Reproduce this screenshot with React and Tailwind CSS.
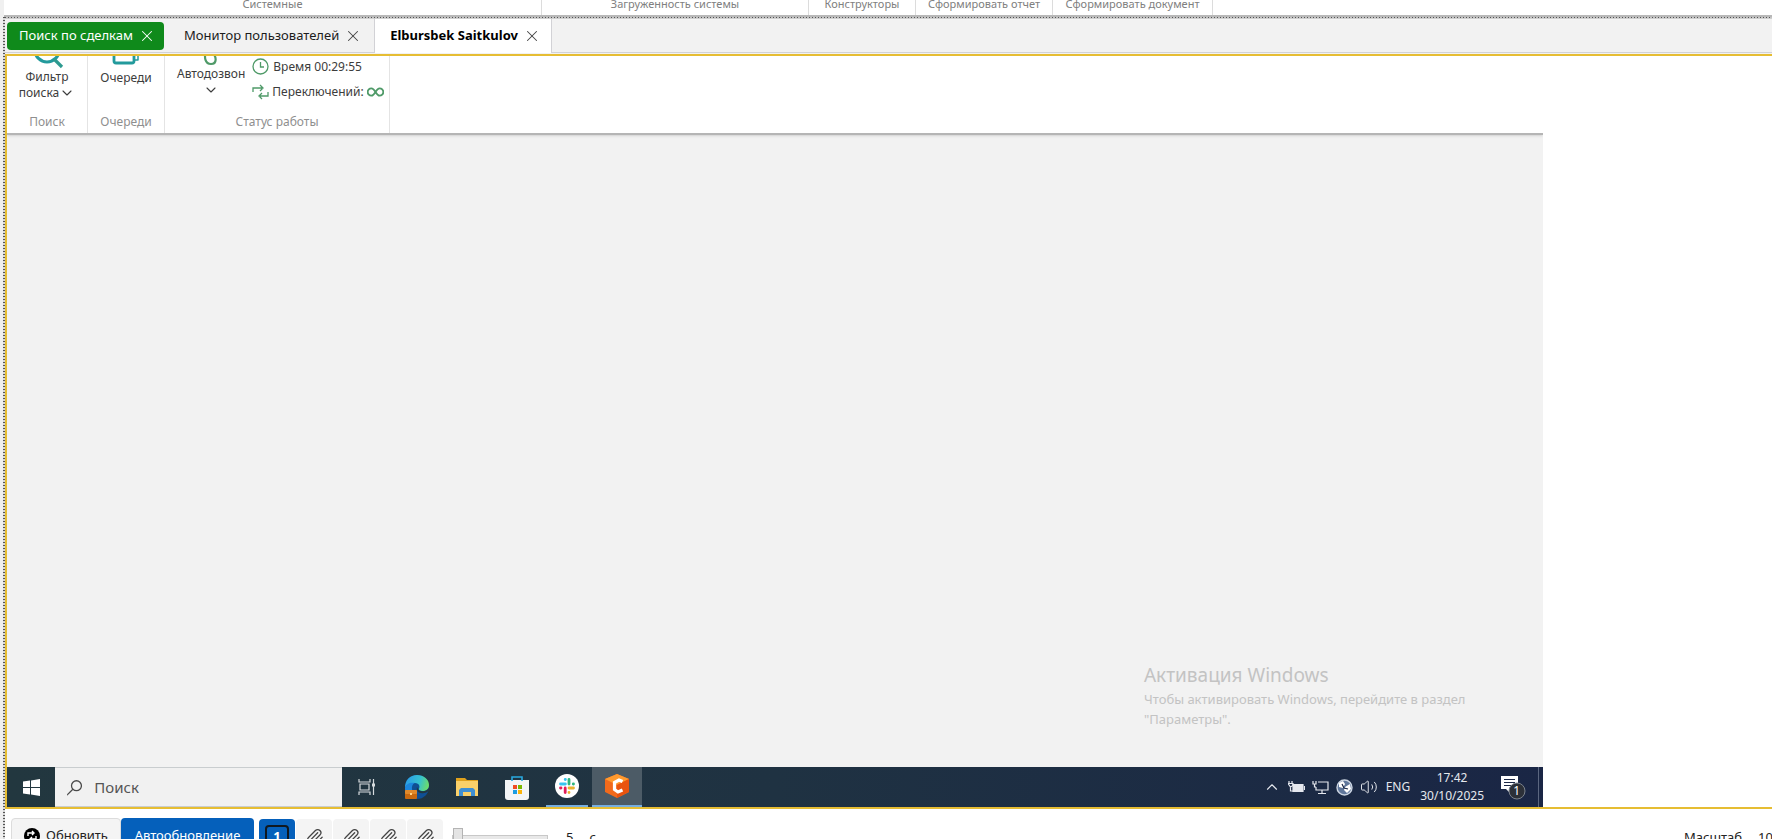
import { ChevronDown, ChevronUp, Paperclip, Volume2, X } from 'lucide-react';

const ribbonGroups = [
  { label: 'Системные', width: 'w-[538px]' },
  { label: 'Загруженность системы', width: 'w-[267px]' },
  { label: 'Конструкторы', width: 'w-[107px]' },
  { label: 'Сформировать отчет', width: 'w-[137px]' },
  { label: 'Сформировать документ', width: 'w-[160px]' },
];

const TopRibbon = () => (
  <header className="flex h-[15px] shrink-0 items-end overflow-hidden bg-white">
    {ribbonGroups.map((group) => (
      <div
        key={group.label}
        className={`${group.width} shrink-0 border-r border-[#dcdcdc] pb-[3px] text-center text-[11px] leading-4 whitespace-nowrap text-[#808080]`}
      >
        {group.label}
      </div>
    ))}
  </header>
);

const CloseButton = ({ label, className }) => (
  <button type="button" aria-label={label} className={className}>
    <X size={18} strokeWidth={1.4} />
  </button>
);

const Tabs = () => (
  <nav className="flex h-[34px] shrink-0 bg-[#f2f2f2] text-[13px]">
    <div className="flex items-center border-b border-[#d2d2d6] pl-[2px]">
      <div className="flex h-7 items-center gap-[5px] rounded bg-[#0f8a1b] pr-2 pl-3 text-white">
        <button type="button">Поиск по сделкам</button>
        <CloseButton label="Закрыть Поиск по сделкам" className="text-white" />
      </div>
    </div>
    <div className="flex items-center gap-[5px] border-b border-[#d2d2d6] pr-3 pl-5 text-[#1c1c1c]">
      <button type="button">Монитор пользователей</button>
      <CloseButton label="Закрыть Монитор пользователей" className="text-[#444]" />
    </div>
    <div className="flex items-center gap-[5px] border-x border-[#d2d2d6] bg-white pr-2.5 pl-[15px] text-black">
      <button type="button" className="font-bold">Elbursbek Saitkulov</button>
      <CloseButton label="Закрыть Elbursbek Saitkulov" className="text-[#444]" />
    </div>
    <div className="flex-1 border-b border-[#d2d2d6]" />
  </nav>
);

const FilterIcon = () => (
  <svg width="34" height="30" viewBox="0 0 34 30" fill="none" stroke="#239a9c" strokeWidth="3.2">
    <circle cx="17" cy="11" r="12" />
    <path d="M24 20l8 8" stroke="#2d9a90" />
  </svg>
);

const QueueIcon = () => (
  <svg width="30" height="30" viewBox="0 0 30 30" fill="none" stroke="#239a9c" strokeWidth="2.8" strokeLinejoin="round">
    <path d="M3 8v17q0 2 2 2h16q2 0 2-2V8z" />
    <path d="M24 24h3V4" strokeWidth="1.5" />
  </svg>
);

const DialIcon = () => (
  <svg width="16" height="30" viewBox="0 0 16 30" fill="none" stroke="#4f9a68" strokeWidth="2.2">
    <path d="M3 16c-2 5-1 12 5 12s6-7 1-12" />
  </svg>
);

const ClockIcon = () => (
  <svg width="17" height="17" viewBox="0 0 17 17" fill="none" stroke="#4f9a68" strokeWidth="1.3">
    <circle cx="8.5" cy="8.5" r="7.5" />
    <path d="M8.5 4v5H12" />
  </svg>
);

const SwitchIcon = () => (
  <svg width="17" height="16" viewBox="0 0 17 16" fill="none" stroke="#4f9a68" strokeWidth="1.3">
    <path d="M1 8V4h9M8 1l3 3-3 3M16 8v4H8M10 9l-3 3 3 3" />
  </svg>
);

const InfinityIcon = () => (
  <svg width="17" height="10" viewBox="0 0 17 10" fill="none" stroke="#4f9a68" strokeWidth="1.8">
    <path d="M8.5 5C7 2.5 6 1.3 4.4 1.3a3.6 3.6 0 0 0 0 7.4C6 8.7 7 7.5 8.5 5s2.5-3.7 4.1-3.7a3.6 3.6 0 0 1 0 7.4C11 8.7 10 7.5 8.5 5z" />
  </svg>
);

const RemoteRibbon = () => (
  <div className="flex h-[79px] shrink-0 overflow-hidden border-b-2 border-[#b5b5b5] bg-white text-xs leading-4 text-[#3c3c3c] shadow-sm">
    <section className="flex w-[81px] flex-col items-center justify-end border-r border-[#e4e4e4] pb-[3px]">
      <button type="button" className="mb-[13px] flex flex-col items-center">
        <FilterIcon />
        <span>Фильтр</span>
        <span className="flex items-center">
          поиска <ChevronDown size={16} strokeWidth={1.6} />
        </span>
      </button>
      <span className="text-[#8f8f8f]">Поиск</span>
    </section>
    <section className="flex w-[77px] flex-col items-center justify-end border-r border-[#e4e4e4] pb-[3px]">
      <button type="button" className="mb-7 flex flex-col items-center">
        <QueueIcon />
        <span className="mt-1">Очереди</span>
      </button>
      <span className="text-[#8f8f8f]">Очереди</span>
    </section>
    <section className="flex w-[225px] flex-col items-center justify-end border-r border-[#e4e4e4] pb-[3px]">
      <div className="mb-3.5 flex w-full items-end gap-[7px] pl-3">
        <button type="button" className="mb-0.5 flex flex-col items-center">
          <DialIcon />
          <span>Автодозвон</span>
          <ChevronDown size={16} strokeWidth={1.6} />
        </button>
        <div className="flex flex-col gap-[9px] whitespace-nowrap">
          <span className="flex items-center gap-1">
            <ClockIcon /> Время 00:29:55
          </span>
          <span className="flex items-center gap-[3px]">
            <SwitchIcon /> Переключений: <InfinityIcon />
          </span>
        </div>
      </div>
      <span className="text-[#8f8f8f]">Статус работы</span>
    </section>
  </div>
);

const WindowsLogo = () => (
  <svg width="17" height="17" viewBox="0 0 17 17" fill="#fff">
    <path d="M0 2.500l7-1V8H0zM8 1.400L17 0v8H8zM0 9h7v6.500l-7-1zM8 9h9v8l-9-1.400z" />
  </svg>
);

const TaskViewIcon = () => (
  <svg width="18" height="16" viewBox="0 0 18 16" fill="none" stroke="#d5dadd" strokeWidth="1.2">
    <path d="M1 0v3h11V0M2 5h9v6H2zM1 16v-3h11v3M15.500 0v16" />
    <path d="M14 4.500h3v3h-3z" fill="#d5dadd" stroke="none" />
  </svg>
);

const EdgeIcon = () => (
  <svg width="26" height="26" viewBox="0 0 26 26">
    <defs>
      <linearGradient id="edgeTop" x1="0" y1="0.3" x2="1" y2="0.5">
        <stop offset="0" stopColor="#2b9be8" />
        <stop offset="0.6" stopColor="#35c1d0" />
        <stop offset="1" stopColor="#6ddc6a" />
      </linearGradient>
    </defs>
    <circle cx="13" cy="13" r="12" fill="#0f4f94" />
    <path d="M1 14C1 6 6 1 13 1c7 0 12 4.500 12 10 0 4-3 6-6.500 6-3 0-4-1-3.500-2.500 1-1.500.5-5.500-4-5.500C6 9 2 11 1 14z" fill="url(#edgeTop)" />
    <path d="M1 14c1-4 5-6 10-5-3 1-4 5-2 9H2c-1-1-1-3-1-4z" fill="#1c86dd" />
    <path d="M13 13c-1 4 2 7 7 6 2 0 4-1 5-3v-2c-2 3-5 3.500-7 3.200-3-.2-4-1.700-5-4.200z" fill="#22373f" />
    <rect x="1" y="16" width="12" height="9" rx="1" fill="#c8690f" />
    <rect x="1" y="16" width="12" height="4" rx="1" fill="#e0892a" />
    <rect x="6" y="19" width="2" height="2" fill="#ffd487" />
  </svg>
);

const FolderIcon = () => (
  <svg width="24" height="20" viewBox="0 0 24 20">
    <path d="M1 1h9l2 2h11v16H1z" fill="#e0a11c" />
    <path d="M1 4h22v15H1z" fill="#fad069" />
    <path d="M4 19v-6l2-2h12l2 2v6h-4v-4H8v4z" fill="#3f8fd2" />
  </svg>
);

const StoreIcon = () => (
  <svg width="24" height="25" viewBox="0 0 24 25">
    <path d="M0 5h24v17q0 3-3 3H3q-3 0-3-3z" fill="#f3f5f6" />
    <path d="M7 6V2h10v4" fill="none" stroke="#29a9e0" strokeWidth="1.6" />
    <path d="M8 10h4v4H8z" fill="#f04e23" />
    <path d="M13 10h4v4h-4z" fill="#7ab800" />
    <path d="M8 15h4v4H8z" fill="#1b9de2" />
    <path d="M13 15h4v4h-4z" fill="#fbb40a" />
  </svg>
);

const SlackIcon = () => (
  <svg width="24" height="24" viewBox="0 0 24 24" fill="none" strokeWidth="2.8" strokeLinecap="round">
    <circle cx="12" cy="12" r="12" fill="#fff" />
    <path d="M5.500 10h4.900M10.400 5.500h-.2" stroke="#36c5f0" />
    <path d="M14 5.500V10M18.500 10h-.2" stroke="#2eb67d" />
    <path d="M14 14h4.500M14 18.500v-.2" stroke="#ecb22e" />
    <path d="M10.200 14v4.500M5.500 14h.5" stroke="#e01e5a" />
  </svg>
);

const CrmIcon = () => (
  <svg width="26" height="24" viewBox="0 0 26 24">
    <path d="M13 0l12 5v13l-12 6-12-6V5z" fill="#f26a1b" />
    <path d="M13 0l12 5-12 6L1 5z" fill="#ff9a2e" />
    <path d="M13 11l12-6v13l-12 6z" fill="#e9540f" />
    <path d="M18.500 7.500L15 6l-4.500 2.500v7L14 18l4.500-2" fill="none" stroke="#fff" strokeWidth="3.2" />
  </svg>
);

const BatteryIcon = () => (
  <svg width="17" height="12" viewBox="0 0 17 12" fill="none" stroke="#e5e8ee" strokeWidth="1.2">
    <path d="M5 3.500h10v7H5z" fill="#e5e8ee" />
    <path d="M16.500 5v4M1 0v2M4 0v2M0 2.500h5v2L2.500 6zM2.500 5v5H5" />
  </svg>
);

const NetworkIcon = () => (
  <svg width="17" height="15" viewBox="0 0 17 15" fill="none" stroke="#e5e8ee" strokeWidth="1.2">
    <path d="M6 2h10v8H4V7M10 10v3M6 13.500h8M1 1v3h3V1M2.500 4v3H4" />
  </svg>
);

const GlobeIcon = () => (
  <svg width="17" height="17" viewBox="0 0 17 17">
    <circle cx="8.500" cy="8.500" r="7.500" fill="#60779b" stroke="#ccd5e2" strokeWidth="1.4" />
    <path d="M3 4l4-2 2 3-2 4-4-1zM9 8l5-3 1 5-4 4-3-3z" fill="#fff" />
    <path d="M6 5l2 4 4 1" stroke="#1a2645" strokeWidth="1.2" fill="none" />
  </svg>
);

const NotificationButton = () => (
  <button type="button" aria-label="Уведомления" className="relative">
    <svg width="26" height="26" viewBox="0 0 26 26">
      <path d="M1 2h17v13h-8v4l-4-4H1z" fill="#fff" />
      <path d="M4 5.500h11M4 8.500h11M4 11.500h7" stroke="#1a2645" />
      <circle cx="17" cy="17" r="8" fill="#2c3038" stroke="#7b828b" />
    </svg>
    <span className="absolute right-[6px] bottom-[1px] text-xs leading-4 text-white">1</span>
  </button>
);

const taskbarApps = [
  { name: 'Представление задач', icon: <TaskViewIcon />, state: '' },
  { name: 'Edge', icon: <EdgeIcon />, state: '' },
  { name: 'Проводник', icon: <FolderIcon />, state: '' },
  { name: 'Store', icon: <StoreIcon />, state: '' },
  { name: 'Slack', icon: <SlackIcon />, state: 'border-b-2 border-[#76aee0] mx-1' },
  { name: 'CRM', icon: <CrmIcon />, state: 'border-b-2 border-[#76aee0] bg-[#4c5b66]' },
];

const Taskbar = () => (
  <div className="flex h-10 shrink-0 bg-linear-to-r from-[#22373f] via-[#1f3242] to-[#1a2645]">
    <button type="button" aria-label="Пуск" className="flex w-12 items-center justify-center">
      <WindowsLogo />
    </button>
    <label className="flex w-[287px] items-center gap-3 border-y border-[#c9cdcf] bg-[#f1f1f1] pl-3">
      <svg width="17" height="17" viewBox="0 0 17 17" fill="none" stroke="#4a4a4a" strokeWidth="1.4">
        <circle cx="10.500" cy="6.500" r="5.500" />
        <path d="M6.500 10.500L0 17" />
      </svg>
      <input
        type="text"
        placeholder="Поиск"
        aria-label="Поиск"
        className="w-full bg-transparent text-[15px] outline-none placeholder:text-[#555]"
      />
    </label>
    <div className="flex">
      {taskbarApps.map((app) => (
        <div key={app.name} className="flex w-[50px]">
          <button type="button" aria-label={app.name} className={`flex flex-1 items-center justify-center ${app.state}`}>
            {app.icon}
          </button>
        </div>
      ))}
    </div>
    <div className="ml-auto flex items-center text-xs text-[#e5e8ee]">
      <div className="flex items-center gap-[7px]">
        <ChevronUp size={18} strokeWidth={1.5} />
        <BatteryIcon />
        <NetworkIcon />
        <GlobeIcon />
        <Volume2 size={18} strokeWidth={1.3} />
      </div>
      <span className="ml-2">ENG</span>
      <div className="ml-2.5 text-center leading-[18px]">
        <div>17:42</div>
        <div>30/10/2025</div>
      </div>
      <div className="mr-3 ml-4 flex">
        <NotificationButton />
      </div>
      <div className="mr-1 h-10 w-px bg-[#5b667f]" />
    </div>
  </div>
);

const RemoteScreen = () => (
  <div className="flex w-[1536px] max-w-full flex-col overflow-hidden bg-[#f2f2f2]">
    <RemoteRibbon />
    <main className="flex flex-1 items-end justify-end pr-[62px] pb-[38px]">
      <div className="w-[337px] text-[13px] text-[#c3c3c3]">
        <p className="text-[19px] leading-7">Активация Windows</p>
        <p className="leading-5">Чтобы активировать Windows, перейдите в раздел "Параметры".</p>
      </div>
    </main>
    <Taskbar />
  </div>
);

const BottomBar = () => (
  <footer className="flex h-[30px] shrink-0 items-start overflow-hidden bg-white pt-[9px] text-[13px] text-[#222]">
    <button type="button" className="ml-[6px] flex h-9 w-[110px] items-center justify-center gap-1.5 rounded border border-[#dcdcdc] bg-[#f4f4f4]">
      <svg width="16" height="16" viewBox="0 0 16 16">
        <circle cx="8" cy="8" r="8" fill="#000" />
        <path d="M4 8V5h5M8 3l2 2-2 2M12 8v3H7M8 9l-2 2 2 2" fill="none" stroke="#fff" strokeWidth="1.4" />
      </svg>
      Обновить
    </button>
    <button type="button" className="h-9 w-[133px] rounded bg-[#0560bb] text-white">
      Автообновление
    </button>
    <div className="ml-[5px] flex gap-px pt-px">
      <button type="button" className="flex h-9 w-9 items-center justify-center rounded bg-[#0560bb] font-bold text-white">
        <span className="flex h-6 w-6 items-center justify-center rounded border-2 border-[#101820]">1</span>
      </button>
      {[2, 3, 4, 5].map((n) => (
        <button key={n} type="button" aria-label={`Монитор ${n}`} className="flex h-9 w-9 items-center justify-center rounded bg-[#f4f4f4] text-[#444]">
          <Paperclip size={19} strokeWidth={1.6} />
        </button>
      ))}
    </div>
    <input
      type="range"
      min="5"
      max="60"
      defaultValue="5"
      aria-label="Интервал обновления"
      className="mt-2.5 ml-[9px] h-5 w-24 appearance-none bg-transparent [&::-webkit-slider-runnable-track]:h-1.5 [&::-webkit-slider-runnable-track]:border [&::-webkit-slider-runnable-track]:border-[#c8c8c8] [&::-webkit-slider-runnable-track]:bg-[#e8e8e8] [&::-webkit-slider-thumb]:-mt-2 [&::-webkit-slider-thumb]:h-5 [&::-webkit-slider-thumb]:w-2.5 [&::-webkit-slider-thumb]:appearance-none [&::-webkit-slider-thumb]:border [&::-webkit-slider-thumb]:border-[#b4b4b4] [&::-webkit-slider-thumb]:bg-[#e4e4e4]"
    />
    <span className="mt-2.5 ml-[18px]">5</span>
    <span className="mt-2.5 ml-4">с</span>
    <div className="mt-2.5 ml-auto flex w-[88px] gap-4 overflow-hidden whitespace-nowrap">
      <span>Масштаб</span>
      <span>100%</span>
    </div>
  </footer>
);

export default function App() {
  return (
    <div className="flex h-screen flex-col overflow-hidden bg-white font-['Noto_Sans',sans-serif]">
      <div className="flex shrink-0 flex-col border-l-4 border-[#f0f0f0]">
        <TopRibbon />
        <div className="h-0.5 bg-[#b8b8b8]" />
      </div>
      <div className="flex min-h-0 flex-1">
        <div className="w-[3px] shrink-0 bg-[#f0f0f0]" />
        <div className="w-0.5 shrink-0 bg-[repeating-linear-gradient(to_bottom,#555_0_1px,#d8d8d8_1px_3px)]" />
        <div className="flex min-w-0 flex-1 flex-col">
          <div className="h-px shrink-0 bg-[repeating-linear-gradient(to_right,#555_0_1px,#c4c4c4_1px_3px)]" />
          <div className="h-px shrink-0 bg-[#cfcfcf]" />
          <Tabs />
          <div className="h-px shrink-0 bg-[#f2f2f2]" />
          <div className="flex min-h-0 flex-1 border-y-2 border-l-2 border-[#e6bd33]">
            <RemoteScreen />
          </div>
          <BottomBar />
        </div>
      </div>
    </div>
  );
}
